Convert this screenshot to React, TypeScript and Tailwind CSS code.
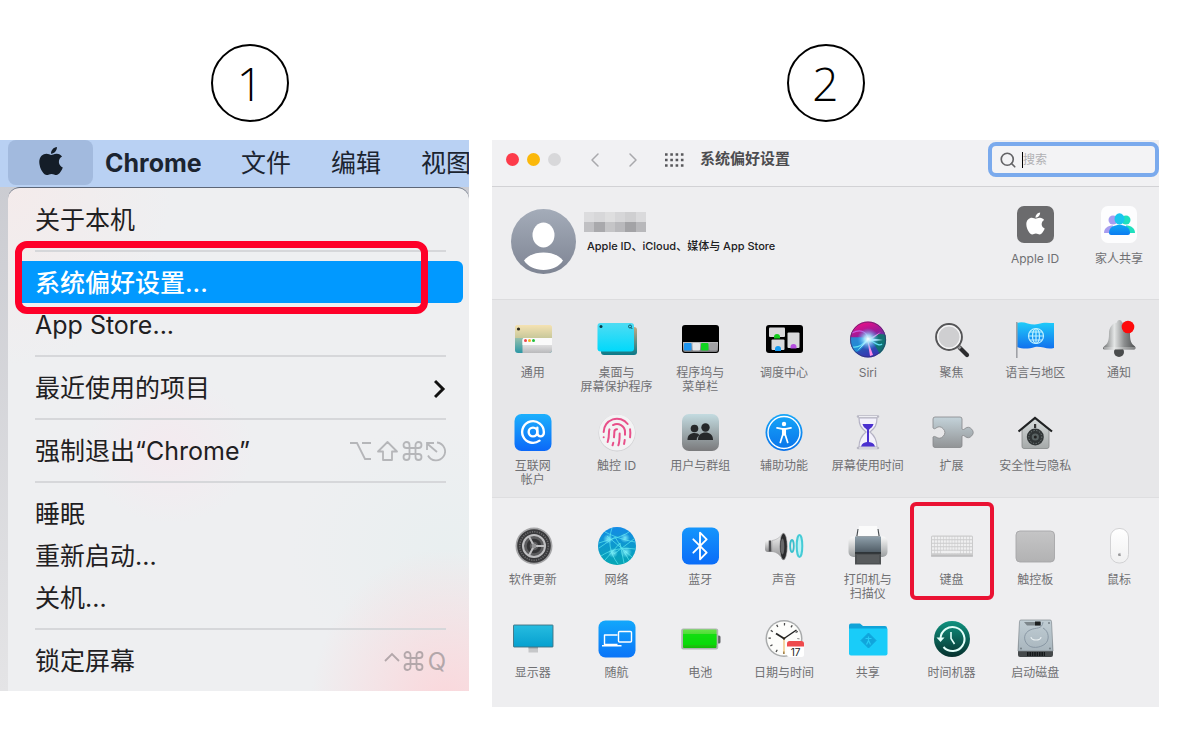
import type { ReactNode } from "react";
import { AtSign, Bluetooth, ChevronLeft, ChevronRight, Fingerprint, Search } from "lucide-react";
import { FaApple } from "react-icons/fa";

type Pref = {
    label: string;
    icon: ReactNode;
    marked?: boolean;
};

function Svg({ children }: { children: ReactNode }) {
    return (
        <svg viewBox="0 0 40 40" className="size-10 overflow-visible" fill="none" aria-hidden="true">
            {children}
        </svg>
    );
}

function Grad({ id, from, to }: { id: string; from: string; to: string }) {
    return (
        <linearGradient id={id} x1="0" y1="0" x2="0" y2="1">
            <stop offset="0" stopColor={from} />
            <stop offset="1" stopColor={to} />
        </linearGradient>
    );
}

const general = (
    <Svg>
        <defs>
            <Grad id="gen" from="#f5e4b4" to="#2b97a5" />
            <Grad id="genWin" from="#ffffff" to="#b9b9bb" />
            <Grad id="genSand" from="#f5e2b2" to="#c8c89a" />
        </defs>
        <rect x="2" y="5" width="37" height="28" rx="3" fill="url(#gen)" />
        <path d="M2 8a3 3 0 0 1 3-3h31a3 3 0 0 1 3 3v10H2z" fill="url(#genSand)" />
        <path d="M9.500 20a2 2 0 0 1 2-2H39v12a3 3 0 0 1-3 3H9.500z" fill="url(#genWin)" />
        <path d="M9.500 20a2 2 0 0 1 2-2H39v7H9.500z" fill="#fafafa" />
        <circle cx="5.500" cy="9" r="1.600" fill="#2c2a20" />
        <circle cx="12.500" cy="20.500" r="1.500" fill="#f0464b" />
        <circle cx="16.500" cy="20.500" r="1.500" fill="#f5b324" />
        <circle cx="20.500" cy="20.500" r="1.500" fill="#23c03c" />
    </Svg>
);

const desktop = (
    <Svg>
        <defs>
            <Grad id="desk" from="#4fdcf3" to="#00d9fb" />
            <Grad id="deskBack" from="#c7a77f" to="#08798a" />
        </defs>
        <rect x="4" y="7" width="36" height="28" rx="3" fill="url(#deskBack)" />
        <rect x="0.500" y="3" width="36.500" height="28.500" rx="3" fill="url(#desk)" />
        <circle cx="4" cy="6.500" r="1.500" fill="#0b3a46" />
        <circle cx="33" cy="6.500" r="1.500" stroke="#0b3a46" strokeWidth="0.800" />
        <path d="M34 7.500l1.300 1.500" stroke="#0b3a46" strokeWidth="0.800" />
    </Svg>
);

const dock = (
    <Svg>
        <defs>
            <Grad id="dockBar" from="#bcbcbe" to="#77777a" />
        </defs>
        <rect x="2" y="5" width="37" height="28" rx="3" fill="#000" />
        <path d="M3 22h35v8a2 2 0 0 1-2 2H5a2 2 0 0 1-2-2z" fill="url(#dockBar)" />
        <rect x="4" y="23" width="7.500" height="7.500" rx="1" fill="#1f95ee" />
        <rect x="12.500" y="23" width="7.500" height="7.500" rx="1" fill="#e6e6e8" />
        <rect x="21" y="23" width="7.500" height="7.500" rx="1" fill="#10d420" />
        <rect x="29.500" y="23" width="7.500" height="7.500" rx="1" fill="#a2a2a5" />
    </Svg>
);

const mission = (
    <Svg>
        <rect x="2" y="5" width="37" height="28" rx="3" fill="#000" />
        <rect x="5" y="7.500" width="16" height="9.500" rx="1" fill="#d9d9db" />
        <rect x="23.500" y="12.500" width="12" height="15.500" rx="1" fill="#d9d9db" />
        <rect x="7.500" y="19.500" width="13" height="10.500" rx="1" fill="#d9d9db" />
        <path d="M10 17a3 3 0 0 1 6 0v1.500h-6z" fill="#12cc1b" />
        <path d="M11 29a3 3 0 0 1 6 0v2h-6z" fill="#149af0" />
        <path d="M26.500 27a3 3 0 0 1 6 0v1.500h-6z" fill="#b64fe0" />
    </Svg>
);

const siri = (
    <Svg>
        <defs>
            <radialGradient id="siriCore">
                <stop offset="0" stopColor="#fff" />
                <stop offset="0.350" stopColor="#a8ecff" stopOpacity="0.850" />
                <stop offset="1" stopColor="#4aa6ff" stopOpacity="0" />
            </radialGradient>
            <linearGradient id="siri" x1="0.300" y1="0" x2="0.600" y2="1">
                <stop offset="0" stopColor="#f00f86" />
                <stop offset="0.350" stopColor="#9c1a98" />
                <stop offset="0.700" stopColor="#2a55b4" />
                <stop offset="1" stopColor="#3a2fb4" />
            </linearGradient>
        </defs>
        <circle cx="20" cy="19.500" r="18" fill="url(#siri)" />
        <path d="M20 19C26 14 33 13 37.500 15a18 18 0 0 1-6 19C29 28 26 23 20 19z" fill="#0a7a68" opacity="0.850" />
        <path d="M20 19C13 16 7 18 2.500 17a18 18 0 0 0 5 15c6-1 9-7 12.500-13z" fill="#1b98dc" opacity="0.850" />
        <path d="M4 13c8-4 15-2 16 6" stroke="#c65be0" strokeWidth="1.200" />
        <path d="M5 27c6 1 10-3 15-8 6 3 11 8 14 5" stroke="#62e0f5" strokeWidth="1.200" />
        <path d="M19 18l3 18 3-1zM20 19l13-7-11 9z" fill="#ff8ce4" />
        <path d="M20 18l15 2-14 1.500zM20 18L9 31l11-10z" fill="#bff9ff" />
        <circle cx="20" cy="19" r="11" fill="url(#siriCore)" />
        <circle cx="20" cy="19.500" r="17.500" stroke="#303063" strokeOpacity="0.600" />
    </Svg>
);

const spotlight = (
    <Svg>
        <path d="M27.500 27.500l7.500 7.500" stroke="#2c2c2e" strokeWidth="4.200" strokeLinecap="round" />
        <path d="M25.500 25.500l3 3" stroke="#9a9a9c" strokeWidth="3" />
        <circle cx="17" cy="17" r="12.800" fill="#cfcfd1" stroke="#555557" strokeWidth="2.200" />
        <circle cx="17" cy="17" r="11.200" stroke="#f3f3f4" strokeWidth="1.400" />
    </Svg>
);

const language = (
    <Svg>
        <defs>
            <Grad id="flag" from="#1fcdfa" to="#1170ee" />
        </defs>
        <path d="M2 3c7-3 13 3 21 1 6-2 11-1 16-1v25c-7 2-12-2-19-1-7 2-12 2-18 0z" fill="url(#flag)" />
        <path d="M1.800 2v36" stroke="#9fa1a6" strokeWidth="1.600" />
        <g stroke="#bdf0ff" strokeWidth="1.200">
            <circle cx="21" cy="16" r="7.500" />
            <ellipse cx="21" cy="16" rx="3.500" ry="7.500" />
            <path d="M13.500 16h15M21 8.500v15M14.500 12h13M14.500 20h13" />
        </g>
    </Svg>
);

const notifications = (
    <Svg>
        <defs>
            <linearGradient id="bell">
                <stop offset="0" stopColor="#6d6f70" />
                <stop offset="0.350" stopColor="#e4e6e6" />
                <stop offset="0.650" stopColor="#8d8f90" />
                <stop offset="1" stopColor="#4d4f50" />
            </linearGradient>
        </defs>
        <circle cx="20" cy="32" r="5" fill="#4a4c4d" />
        <path d="M18 2.500a2.500 2.500 0 0 1 5 0c5 1 7.500 5 8 11 0 7 1 10 5 13 1 1 .5 3-1 3H5.500c-2 0-2-2-.5-3 4-3 5-6 5-13C10 7.500 13 3.500 18 2.500z" fill="url(#bell)" />
        <path d="M5 28h31" stroke="#f1f1f1" strokeOpacity="0.600" />
        <circle cx="29" cy="7" r="6.300" fill="#fe0b0b" />
    </Svg>
);

const internet = (
    <Svg>
        <defs>
            <Grad id="at" from="#1cb0fd" to="#0b68f8" />
        </defs>
        <rect x="1.500" y="1" width="37" height="37" rx="7" fill="url(#at)" />
        <AtSign x={7} y={6} width={26} height={26} color="#fff" strokeWidth={2.2} />
    </Svg>
);

const touchId = (
    <Svg>
        <circle cx="20" cy="20" r="18.500" fill="#cfcfd2" />
        <circle cx="20" cy="19.500" r="18" fill="#f3f3f4" />
        <Fingerprint x={4} y={3} width={32} height={32} color="#e8508a" strokeWidth={1.5} />
    </Svg>
);

const users = (
    <Svg>
        <defs>
            <Grad id="users" from="#c3dbe0" to="#7a7a7c" />
        </defs>
        <rect x="2" y="1" width="37" height="37" rx="7" fill="url(#users)" />
        <g fill="#26282a">
            <circle cx="14.500" cy="15.500" r="3.800" />
            <path d="M7.500 27c0-5 3-7 7-7 2.500 0 4 .8 5 2-2 1.500-2.800 3-2.800 5z" />
            <circle cx="25.500" cy="14.500" r="4.200" />
            <path d="M18 27c0-5.500 3.500-7.500 7.500-7.500S33 21.500 33 27z" />
        </g>
    </Svg>
);

const accessibility = (
    <Svg>
        <defs>
            <Grad id="acc" from="#16a6f8" to="#0a72ea" />
        </defs>
        <circle cx="20" cy="19.500" r="18.500" fill="url(#acc)" />
        <circle cx="20" cy="19.500" r="16" stroke="#fff" strokeWidth="1.400" />
        <circle cx="20" cy="11" r="2.200" fill="#fff" />
        <path d="M13 14.800l5 1h4l5-1M18.800 16v5.500l-2.500 8M21.200 16v5.500l2.500 8" stroke="#fff" strokeWidth="1.700" strokeLinecap="round" />
        <path d="M18 15.500h4v6l-2 1.500-2-1.500z" fill="#fff" />
    </Svg>
);

const screenTime = (
    <Svg>
        <path d="M11 5h18c0 7-2 10-7 14 5 4 7 8 7 15H11c0-7 2-11 7-15-5-4-7-7-7-14z" fill="#f3f1fb" stroke="#b4b2c4" strokeWidth="1.200" />
        <path d="M10 3.500h20M10 35h20" stroke="#b9b8c4" strokeWidth="2.600" strokeLinecap="round" />
        <path d="M11 3.500h18M11 35h18" stroke="#eeeef4" strokeWidth="1" />
        <path d="M14.500 11h11c-1 4-3.500 4-4.500 6v12c3 .5 5 1.500 6 4.500H13c1-3 3-4 6-4.500V17c-1-2-3.500-2-4.500-6z" fill="#4a30cf" />
    </Svg>
);

const extensions = (
    <Svg>
        <defs>
            <Grad id="puz" from="#c4d3da" to="#929496" />
        </defs>
        <path d="M3 4h25a2 2 0 0 1 2 2v10c1 1 2 .5 3-.5a5 5 0 1 1 0 8c-1-1-2-1.500-3-.5v9.500a2 2 0 0 1-2 2H3a2 2 0 0 1-2-2V24c1-1 2-.5 3 0a5.500 5.500 0 1 0 0-9c-1 1-2 1-3 0V6a2 2 0 0 1 2-2z" fill="url(#puz)" stroke="#858789" strokeWidth="0.800" />
    </Svg>
);

const security = (
    <Svg>
        <defs>
            <Grad id="house" from="#d8dddd" to="#a5a9a9" />
        </defs>
        <path d="M20 5l14 12v16.500a2 2 0 0 1-2 2H9a2 2 0 0 1-2-2V17z" fill="url(#house)" stroke="#858989" strokeWidth="0.800" />
        <path d="M3.500 18.500L20 5l17 13.500" stroke="#202223" strokeWidth="2.200" />
        <rect x="19" y="11" width="2.200" height="4" fill="#333" />
        <circle cx="20.300" cy="24" r="8.500" fill="#303536" />
        <circle cx="20.300" cy="24" r="6.500" stroke="#788080" strokeWidth="1" strokeDasharray="1.200 1.600" />
        <circle cx="20.300" cy="24" r="3.600" fill="#596262" />
        <circle cx="20.300" cy="24" r="1.500" fill="#222" />
    </Svg>
);

const softwareUpdate = (
    <Svg>
        <circle cx="21" cy="19" r="18.500" fill="#a5a5a7" />
        <circle cx="21" cy="19" r="16.800" fill="#39393b" />
        <circle cx="21" cy="19" r="14.300" stroke="#6c6c6e" strokeWidth="1.600" strokeDasharray="1.200 1.200" />
        <circle cx="21" cy="19" r="11" fill="#5b5b5d" stroke="#bebec0" strokeWidth="2" />
        <circle cx="21" cy="19" r="5.800" stroke="#343436" strokeWidth="3" />
        <path d="M21 19L16 9.500M21 19h11M21 19l-5 9.500" stroke="#bebec0" strokeWidth="2" />
        <circle cx="21" cy="19" r="2.400" fill="#939395" />
    </Svg>
);

const network = (
    <Svg>
        <defs>
            <Grad id="net" from="#148be6" to="#06a7b4" />
            <radialGradient id="netGlow">
                <stop offset="0" stopColor="#8ffaff" stopOpacity="0.800" />
                <stop offset="1" stopColor="#8ffaff" stopOpacity="0" />
            </radialGradient>
        </defs>
        <circle cx="20" cy="19" r="19" fill="url(#net)" />
        <g stroke="#5fe9f0" strokeWidth="0.800" strokeOpacity="0.850">
            <path d="M8 5c8 4 18 8 30 10M2 16c11-4 21-5 30-11M4 29c9-6 20-9 34-7M15 1c-4 12-3 24 6 36M10 9l25 21M2 21l16-11 14 23M17 27L37 12M8 33l15-17 4 20" />
        </g>
        <circle cx="11" cy="12" r="5" fill="url(#netGlow)" />
        <circle cx="28" cy="11" r="5" fill="url(#netGlow)" />
        <circle cx="16" cy="26" r="5" fill="url(#netGlow)" />
        <circle cx="29" cy="25" r="6" fill="url(#netGlow)" />
    </Svg>
);

const bluetooth = (
    <Svg>
        <defs>
            <Grad id="bt" from="#1495fc" to="#0a6cf8" />
        </defs>
        <rect x="2" y="0.500" width="37" height="37" rx="7" fill="url(#bt)" />
        <Bluetooth x={4} y={3} width={32} height={32} color="#fff" strokeWidth={1.4} />
    </Svg>
);

const sound = (
    <Svg>
        <defs>
            <Grad id="horn" from="#f6f6f6" to="#8c8c8e" />
        </defs>
        <rect x="1" y="13" width="9" height="12" rx="3" fill="url(#horn)" />
        <path d="M6 13.500v11" stroke="#4d4d50" strokeWidth="2.500" />
        <path d="M8 13.500c6-1 8-4 11-7v26c-3-4-5-7-11-8z" fill="url(#horn)" stroke="#9c9c9e" strokeWidth="0.500" />
        <ellipse cx="19.500" cy="19.500" rx="3.800" ry="13.300" fill="#2b2b2d" stroke="#b9b9bb" strokeWidth="0.600" />
        <ellipse cx="18.500" cy="19.500" rx="1.800" ry="8" fill="#68686a" />
        <ellipse cx="28" cy="19" rx="1.800" ry="6" stroke="#38bfcc" strokeWidth="1.800" />
        <ellipse cx="35.500" cy="19" rx="2.800" ry="11" fill="#bdf3f6" stroke="#45cbd6" strokeWidth="2" />
    </Svg>
);

const printer = (
    <Svg>
        <defs>
            <Grad id="prn" from="#fafafa" to="#9b9ea0" />
            <Grad id="prnMid" from="#8fa0ab" to="#4b5760" />
        </defs>
        <path d="M8 11l1.500-9h21l1.500 9z" fill="#42474b" />
        <path d="M11-1h18l1.500 10h-21z" fill="#fbfbfb" />
        <rect x="0.500" y="9.500" width="39" height="20.500" rx="5" fill="url(#prn)" />
        <rect x="7" y="9.500" width="26" height="17" fill="url(#prnMid)" />
        <path d="M7 26.500h26v11H7z" fill="#4d5052" />
        <path d="M9 29h22M9 31h22M9 33h22M9 35h22" stroke="#6e7173" strokeWidth="0.700" />
        <path d="M7 26h26" stroke="#24282b" strokeWidth="1.500" />
    </Svg>
);

const keyboard = (
    <Svg>
        <rect x="-1" y="8.500" width="42" height="21" rx="1.500" fill="#cbcbcc" />
        <path d="M0 11h40M0 14.500h40M0 18h40M0 21.500h40M0 25h40" stroke="#efeff0" strokeWidth="2.300" strokeDasharray="2.300 0.600" />
        <path d="M10 25h17" stroke="#efeff0" strokeWidth="2.300" />
        <path d="M-1 29h42" stroke="#b0b0b2" />
    </Svg>
);

const trackpad = (
    <Svg>
        <defs>
            <Grad id="pad" from="#c5c5c6" to="#b2b2b3" />
        </defs>
        <rect x="1" y="4" width="38.500" height="31" rx="4" fill="url(#pad)" stroke="#a6a6a8" strokeWidth="0.900" />
    </Svg>
);

const mouse = (
    <Svg>
        <defs>
            <Grad id="mouse" from="#ffffff" to="#f0f0f1" />
        </defs>
        <rect x="11.500" y="1.500" width="18" height="34.500" rx="8.500" fill="url(#mouse)" stroke="#d2d2d4" strokeWidth="1" />
        <FaApple x={18.500} y={25.500} size={4} color="#9a9a9c" />
    </Svg>
);

const displays = (
    <Svg>
        <defs>
            <Grad id="disp" from="#27bce0" to="#06a0cf" />
        </defs>
        <path d="M15.500 26.500h9.500v6h-9.500z" fill="#c6c7c9" />
        <path d="M15.500 26.500h9.500v2h-9.500z" fill="#a3a5a7" />
        <rect x="0.500" y="5" width="39.500" height="22" rx="0.500" fill="url(#disp)" stroke="#42707f" strokeWidth="0.900" />
    </Svg>
);

const sidecar = (
    <Svg>
        <defs>
            <Grad id="side" from="#13a7fb" to="#0a74f8" />
        </defs>
        <rect x="1.500" y="0.500" width="37" height="37" rx="7" fill="url(#side)" />
        <g stroke="#fff" strokeWidth="1.400" strokeLinejoin="round">
            <path d="M20.500 15H7.500v9.500h13M5 25.700h19.500" />
            <rect x="21.500" y="11.500" width="13" height="10.500" rx="1" />
        </g>
    </Svg>
);

const battery = (
    <Svg>
        <defs>
            <Grad id="bat" from="#63e647" to="#11bd05" />
        </defs>
        <rect x="37" y="15.500" width="3.500" height="8" rx="1.500" fill="#606366" />
        <rect x="1.200" y="8.500" width="37" height="21" rx="2" fill="#b0b4b2" />
        <rect x="3" y="9.500" width="33.500" height="18.500" rx="1" fill="url(#bat)" />
        <path d="M3 14h33.500v11H3z" fill="#04de08" opacity="0.800" />
    </Svg>
);

const dateTime = (
    <Svg>
        <circle cx="20" cy="18.500" r="18.500" fill="#a9abac" />
        <circle cx="20" cy="18.500" r="17" fill="#fdfdfb" />
        <circle cx="20" cy="18.500" r="14.300" stroke="#4b4b4b" strokeWidth="2.400" strokeDasharray="1.300 6.190" strokeDashoffset="0.600" />
        <path d="M20 18.500l-8-5" stroke="#222" strokeWidth="1.800" />
        <path d="M20 18.500L32.500 10" stroke="#222" strokeWidth="1.500" />
        <path d="M20 17v17" stroke="#e6a63b" strokeWidth="0.900" />
        <circle cx="20" cy="18.500" r="1.200" fill="#222" />
        <rect x="23" y="21" width="17" height="16" rx="2.500" fill="#fff" />
        <path d="M23 26.500v-3a2.500 2.500 0 0 1 2.500-2.500h12a2.500 2.500 0 0 1 2.500 2.500v3z" fill="#ee4a4d" />
        <text x="31.500" y="35.500" textAnchor="middle" fontSize="10" fontFamily="Inter, sans-serif" fill="#222">
            17
        </text>
    </Svg>
);

const sharing = (
    <Svg>
        <path d="M1 5.500a2 2 0 0 1 2-2h9L15 6h22a2 2 0 0 1 2 2v11.500H1z" fill="#11a3d8" />
        <path d="M1 8.500h38.500v25a2 2 0 0 1-2 2H3a2 2 0 0 1-2-2z" fill="#19ccf9" />
        <path d="M20.500 13l7.500 7.500-7.500 7.500-7.500-7.500z" fill="#10a5dc" stroke="#10a5dc" strokeWidth="1" strokeLinejoin="round" />
        <path d="M17.500 18.500h6M20.500 16.500v4l-2 4M20.500 20.500l2 4" stroke="#25ccf5" strokeWidth="1.200" />
    </Svg>
);

const timeMachine = (
    <Svg>
        <defs>
            <Grad id="tm" from="#0f927f" to="#06302d" />
        </defs>
        <circle cx="20" cy="19" r="18" fill="url(#tm)" />
        <path d="M8.500 18.500a12 12 0 1 1 3 8.500" stroke="#e3fffa" strokeWidth="2" />
        <path d="M4.500 17.500h8l-4 4.500z" fill="#e3fffa" />
        <path d="M19 12v6.500l3.500 5.500" stroke="#e3fffa" strokeWidth="1.600" />
    </Svg>
);

const startupDisk = (
    <Svg>
        <defs>
            <Grad id="disk" from="#c0cdd4" to="#a9b6be" />
        </defs>
        <path d="M6 0h29l3 30v5a2 2 0 0 1-2 2H5a2 2 0 0 1-2-2v-5z" fill="#45494b" />
        <path d="M6 0h29a1.500 1.500 0 0 1 1.500 1.500L38 31H3L4.500 1.500A1.500 1.500 0 0 1 6 0z" fill="url(#disk)" stroke="#818a8f" strokeWidth="0.700" />
        <path d="M28 8c6 3 7 12 2 16s-14 5-18 0-3-11 3-14 12 0 13-8" stroke="#8593a0" strokeWidth="0.900" />
        <path d="M16 17a5 3 0 0 0 10 0" stroke="#e7edf0" strokeWidth="1.200" />
        <path d="M9 2h17v3.500H12z" fill="#7c868b" />
        <rect x="20" y="1.500" width="5.500" height="4" fill="#1c1f20" />
        <g fill="#6f7a80">
            <circle cx="6" cy="28.500" r="0.900" />
            <circle cx="35" cy="28.500" r="0.900" />
            <circle cx="34" cy="3" r="0.900" />
        </g>
        <path d="M12 34h18" stroke="#15181a" strokeWidth="4" strokeDasharray="1.600 0.800" />
    </Svg>
);

const personalPrefs: Pref[] = [
    { label: "通用", icon: general },
    { label: "桌面与\n屏幕保护程序", icon: desktop },
    { label: "程序坞与\n菜单栏", icon: dock },
    { label: "调度中心", icon: mission },
    { label: "Siri", icon: siri },
    { label: "聚焦", icon: spotlight },
    { label: "语言与地区", icon: language },
    { label: "通知", icon: notifications },
    { label: "互联网\n帐户", icon: internet },
    { label: "触控 ID", icon: touchId },
    { label: "用户与群组", icon: users },
    { label: "辅助功能", icon: accessibility },
    { label: "屏幕使用时间", icon: screenTime },
    { label: "扩展", icon: extensions },
    { label: "安全性与隐私", icon: security },
];

const hardwarePrefs: Pref[] = [
    { label: "软件更新", icon: softwareUpdate },
    { label: "网络", icon: network },
    { label: "蓝牙", icon: bluetooth },
    { label: "声音", icon: sound },
    { label: "打印机与\n扫描仪", icon: printer },
    { label: "键盘", icon: keyboard, marked: true },
    { label: "触控板", icon: trackpad },
    { label: "鼠标", icon: mouse },
    { label: "显示器", icon: displays },
    { label: "随航", icon: sidecar },
    { label: "电池", icon: battery },
    { label: "日期与时间", icon: dateTime },
    { label: "共享", icon: sharing },
    { label: "时间机器", icon: timeMachine },
    { label: "启动磁盘", icon: startupDisk },
];

function StepNumber({ children }: { children: ReactNode }) {
    return (
        <div className="flex size-[78px] items-center justify-center rounded-full border-2 border-black font-['Open_Sans',sans-serif] text-[46px] font-light text-black">
            {children}
        </div>
    );
}

function Divider() {
    return (
        <div className="flex h-[21px] items-center pr-[17px] pl-[21px]">
            <hr className="w-full border-t-2 border-[#d6d7da]" />
        </div>
    );
}

function MenuItem({ label, right }: { label: string; right?: ReactNode }) {
    return (
        <button className="flex h-[42px] w-full items-center justify-between pt-1 pr-[17px] pl-[21px] text-left">
            <span>{label}</span>
            {right}
        </button>
    );
}

function ShortcutKeys() {
    return (
        <svg viewBox="0 0 96 24" className="h-6 w-24" fill="none" stroke="#b5b6b9" strokeWidth="1.800" aria-label="⌥⇧⌘⎋">
            <path d="M0 3h7l8 16h6M12 3h9" />
            <path d="M37.500 2L47 11.500h-5V20h-9v-8.500h-5z" strokeLinejoin="round" />
            <path d="M59.500 8v6M65.500 8v6M59.500 8h6M59.500 14h6M59.500 8h-3a3 3 0 1 1 3-3zM65.500 8V5a3 3 0 1 1 3 3zM65.500 14h3a3 3 0 1 1-3 3zM59.500 14v3a3 3 0 1 1-3-3z" />
            <path d="M87 2.500a9 9 0 1 1-9 13M87 12L77 3.500M77 10V3h7" />
        </svg>
    );
}

function LockKeys() {
    return (
        <span className="flex items-center gap-1 text-[#b3a7aa]">
            <svg viewBox="0 0 40 24" className="h-6 w-10" fill="none" stroke="currentColor" strokeWidth="1.800" aria-label="⌃⌘">
                <path d="M1 11l7-7 7 7" />
                <path d="M26.500 8v6M32.500 8v6M26.500 8h6M26.500 14h6M26.500 8h-3a3 3 0 1 1 3-3zM32.500 8V5a3 3 0 1 1 3 3zM32.500 14h3a3 3 0 1 1-3 3zM26.500 14v3a3 3 0 1 1-3-3z" />
            </svg>
            <span className="text-2xl">Q</span>
        </span>
    );
}

function AppleMenu() {
    return (
        <section className="overflow-hidden bg-gradient-to-b from-[#c9cad0] to-[#e4e4e6]">
            <nav className="flex h-[47px] items-center overflow-hidden bg-[#b9d1f3] pl-2 text-[25px] whitespace-nowrap text-[#1b2430]">
                <button className="flex h-[45px] w-[85px] shrink-0 items-center justify-center self-start rounded-lg bg-[#a2bade]" aria-label="Apple">
                    <FaApple className="mb-1 size-8 text-[#141d28]" />
                </button>
                <button className="ml-3 w-[96px] shrink-0 text-left font-bold">Chrome</button>
                <button className="ml-10 shrink-0">文件</button>
                <button className="ml-10 shrink-0">编辑</button>
                <button className="ml-10 shrink-0">视图</button>
            </nav>

            <div className="ml-2 rounded-t-xl border-t border-[#5d6778] bg-[#eeeff1] bg-[radial-gradient(ellipse_at_95%_104%,#fbd6da_0,#fbd6da00_22%),radial-gradient(ellipse_at_35%_52%,#f4eaef_0,#f4eaef00_20%),radial-gradient(ellipse_at_95%_72%,#e9eff0_0,#e9eff000_25%),radial-gradient(ellipse_at_0%_0%,#f4ebeb_0,#f4ebeb00_25%)] px-[6px] pt-[10px] pb-[10px] text-[25px] text-[#1f2022]">
                <MenuItem label="关于本机" />
                <Divider />
                <div className="relative">
                    <button className="flex h-[42px] w-full items-center rounded-md bg-[#0199ff] pt-1 pl-[21px] text-left font-medium text-white">
                        系统偏好设置...
                    </button>
                    <div className="pointer-events-none absolute -top-5 right-[35px] -bottom-[11px] left-px rounded-xl border-[7px] border-[#fe0029]" />
                    {/* the menu background shows left of the marked frame */}
                    <div className="absolute inset-y-0 left-0 w-px bg-[#eeeff1]" />
                </div>
                <MenuItem label="App Store..." />
                <Divider />
                <MenuItem
                    label="最近使用的项目"
                    right={
                        <svg viewBox="0 0 12 20" className="h-5 w-3" fill="none" stroke="#111" strokeWidth="3" aria-hidden="true">
                            <path d="M1 2l8 8-8 8" />
                        </svg>
                    }
                />
                <Divider />
                <MenuItem label="强制退出“Chrome”" right={<ShortcutKeys />} />
                <Divider />
                <MenuItem label="睡眠" />
                <MenuItem label="重新启动..." />
                <MenuItem label="关机..." />
                <Divider />
                <MenuItem label="锁定屏幕" right={<LockKeys />} />
            </div>
        </section>
    );
}

function PrefItem({ pref }: { pref: Pref }) {
    return (
        <button className="relative flex h-[73px] flex-col items-center gap-[6px] text-xs leading-[14px] whitespace-pre text-[#707073]">
            {pref.icon}
            <span>{pref.label}</span>
            {pref.marked && (
                <span className="absolute inset-x-0 -top-[25px] bottom-0 rounded-md border-4 border-[#ea1233]" />
            )}
        </button>
    );
}

function PrefGrid({ prefs }: { prefs: Pref[] }) {
    return (
        <div className="-mr-[2px] -ml-px grid grid-cols-8 gap-y-5">
            {prefs.map((pref) => (
                <PrefItem key={pref.label} pref={pref} />
            ))}
        </div>
    );
}

// Blurred-out account name, drawn as a mosaic
function NameMosaic() {
    const rows = [
        ["#dcdcde", "#d7d7d9", "#dededf", "#d6d6d8", "#cfcfd1", "#dadadc"],
        ["#c0c0c3", "#a9a9ac", "#c5c5c7", "#b9b9bc", "#a3a3a6", "#b8b8bb"],
    ];
    return (
        <div className="grid h-5 w-[62px] grid-cols-6 grid-rows-2" aria-hidden="true">
            {rows.flat().map((color, i) => (
                <span key={i} style={{ backgroundColor: color }} />
            ))}
        </div>
    );
}

function SystemPreferences() {
    return (
        <section className="bg-[#eeeef0]">
            <header className="flex h-[47px] items-center border-b border-[#d2d2d5] bg-[#f1f1f3] pb-[7px] pl-[14px]">
                <div className="flex gap-2">
                    <button className="size-[13px] rounded-full bg-[#fd3b4a]" aria-label="关闭" />
                    <button className="size-[13px] rounded-full bg-[#fbb80a]" aria-label="最小化" />
                    <button className="size-[13px] rounded-full bg-[#d8d8da]" aria-label="缩放" />
                </div>
                <button className="ml-[22px]" aria-label="后退">
                    <ChevronLeft className="size-6 text-[#a9a9ac]" strokeWidth={1.5} />
                </button>
                <button className="ml-[14px]" aria-label="前进">
                    <ChevronRight className="size-6 text-[#a9a9ac]" strokeWidth={1.5} />
                </button>
                <button className="ml-5" aria-label="显示全部">
                    <svg viewBox="0 0 19 14" className="h-[14px] w-[19px]" stroke="#58585b" strokeWidth="2.600" strokeDasharray="2.600 2.700" aria-hidden="true">
                        <path d="M0 1.500h19M0 7h19M0 12.500h19" />
                    </svg>
                </button>
                <h1 className="ml-4 text-[15px] font-semibold text-[#4c4c4f]">系统偏好设置</h1>
                <label className="ml-auto flex h-[35px] w-[171px] items-center rounded-lg border-4 border-[#7aaaed] bg-[#f3f3f5] pl-[7px]">
                    <Search className="size-[18px] shrink-0 text-[#636366]" strokeWidth={2.2} />
                    <span className="ml-[5px] h-4 w-px shrink-0 bg-black" />
                    <input
                        type="text"
                        aria-label="搜索"
                        placeholder="搜索"
                        className="w-full min-w-0 bg-transparent text-xs outline-none placeholder:text-[#b0b0b3]"
                    />
                </label>
            </header>

            <div className="flex h-[113px] items-start border-b border-[#dcdcde] pl-[19px]">
                <svg viewBox="0 0 65 65" className="mt-[22px] size-[65px]" aria-hidden="true">
                    <defs>
                        <Grad id="avatar" from="#a4acb9" to="#7e8493" />
                    </defs>
                    <circle cx="32.500" cy="32.500" r="32.500" fill="url(#avatar)" />
                    <ellipse cx="32.500" cy="26" rx="11" ry="12.500" fill="#fff" />
                    <path d="M13 51.500c5-6 12-8 19.500-8s14.500 2 19.500 8c-4 6-11 9.500-19.500 9.500S17 57.500 13 51.500z" fill="#fff" />
                </svg>
                <div className="mt-[25px] ml-2 flex flex-col gap-[6px]">
                    <NameMosaic />
                    <p className="pl-[3px] text-[11px] leading-4 font-medium text-[#202022]">Apple ID、iCloud、媒体与 App Store</p>
                </div>
                <div className="-mr-[2px] ml-auto flex pt-[17px]">
                    <button className="flex w-[84px] flex-col items-center gap-2 text-xs leading-[14px] text-[#707073]">
                        <Svg>
                            <rect x="2" y="2" width="37" height="37" rx="7" fill="#6b6b6d" />
                            <FaApple x={8} y={7} size={25} color="#fff" />
                        </Svg>
                        Apple ID
                    </button>
                    <button className="flex w-[84px] flex-col items-center gap-2 text-xs leading-[14px] text-[#707073]">
                        <Svg>
                            <defs>
                                <Grad id="family" from="#10a5f4" to="#0b7cf0" />
                            </defs>
                            <rect x="2" y="2" width="36" height="37" rx="7" fill="#fdfdfe" />
                            <circle cx="14" cy="16" r="4.500" fill="#a79df0" />
                            <path d="M5 29c0-5 4-7.500 9-7.500V29z" fill="#a79df0" />
                            <circle cx="27" cy="16" r="4.500" fill="#1fe0bd" />
                            <path d="M36 29c0-5-4-7.500-9-7.500V29z" fill="#1fe0bd" />
                            <ellipse cx="20.500" cy="15" rx="5" ry="5.800" fill="#18c6ee" />
                            <path d="M10 29c0-6 5-8 10.500-8S31 23 31 29c0 1-1 2-2 2H12c-1 0-2-1-2-2z" fill="url(#family)" />
                        </Svg>
                        家人共享
                    </button>
                </div>
            </div>

            <div className="border-b border-[#dedee0] bg-[#e7e7e9] pt-5 pb-[11px]">
                <PrefGrid prefs={personalPrefs} />
            </div>

            <div className="pt-[29px] pb-[14px]">
                <PrefGrid prefs={hardwarePrefs} />
            </div>
        </section>
    );
}

export default function App() {
    return (
        <main className="min-h-screen bg-white pt-11 font-['Inter','Noto_Sans_CJK_SC',sans-serif]">
            <div className="grid grid-cols-[minmax(0,469fr)_minmax(0,667fr)] items-start gap-x-[23px] gap-y-[18px] pr-[21px]">
                <div className="flex justify-center pl-[31px]">
                    <StepNumber>1</StepNumber>
                </div>
                <div className="flex justify-center">
                    <StepNumber>2</StepNumber>
                </div>
                <AppleMenu />
                <SystemPreferences />
            </div>
        </main>
    );
}
